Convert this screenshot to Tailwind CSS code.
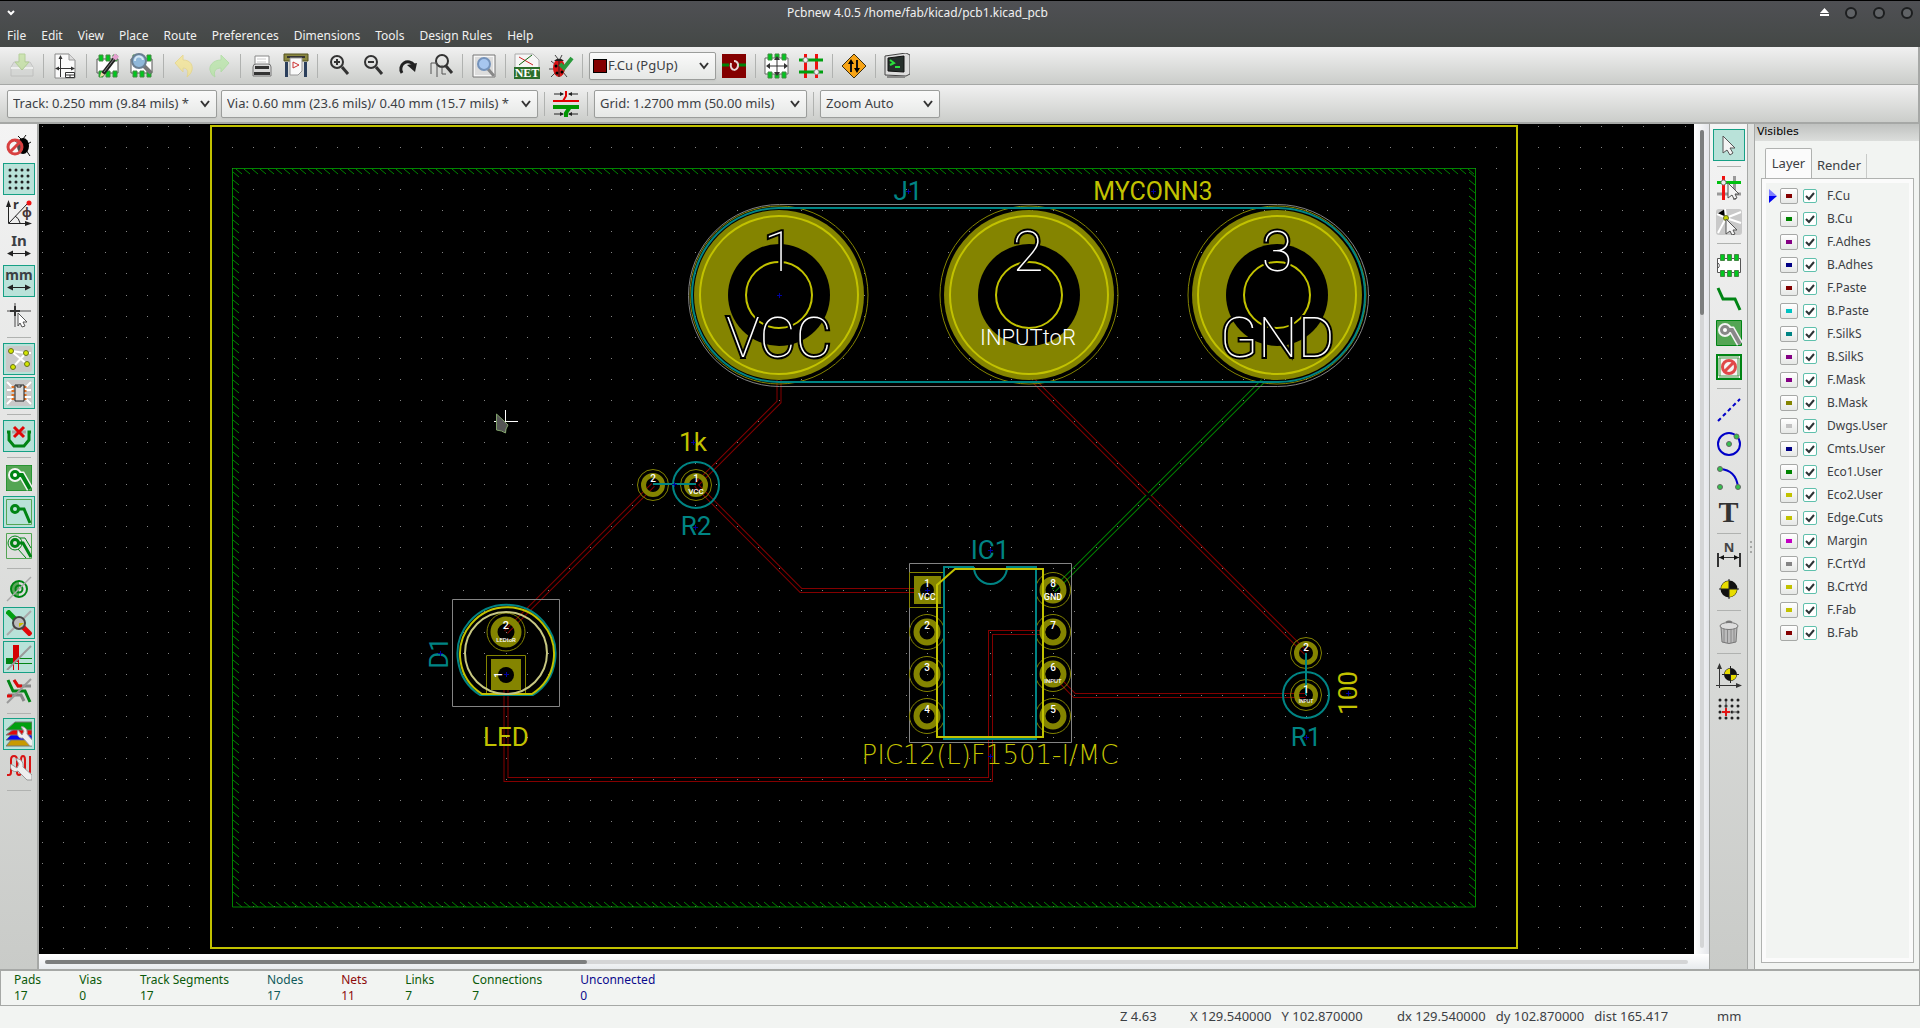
<!DOCTYPE html>
<html lang="en">
<head>
    <meta charset="UTF-8">
    <meta name="viewport" content="width=device-width, initial-scale=1.0">
    <title>Pcbnew 4.0.5 /home/fab/kicad/pcb1.kicad_pcb</title>
    <script src="https://cdn.jsdelivr.net/npm/@tailwindcss/browser@4"></script>
</head>
<body class="h-screen flex flex-col overflow-hidden bg-[#f2f4f2] text-[13px] text-[#3c4044] font-['Noto_Sans','Open_Sans',sans-serif]">

    <!-- Title bar and menu -->
    <header class="shrink-0 h-[47px] border-t border-black bg-linear-to-b from-[#4f5054] to-[#444846] text-[#f0f0f0]">
        <div class="h-[23px] flex items-center px-[7px]">
            <button aria-label="Window menu" class="w-2"><svg width="8" height="6" fill="none" stroke="#fff" stroke-width="2"><path d="M1 1l3 3 3-3"/></svg></button>
            <h1 class="grow text-center text-[12px]">Pcbnew 4.0.5 /home/fab/kicad/pcb1.kicad_pcb</h1>
            <div class="flex items-center gap-4">
                <button aria-label="Shade"><svg width="9" height="9" fill="#fff"><path d="M0 5l4.500-5L9 5zM0 6h9v2H0z"/></svg></button>
                <button aria-label="Minimize" class="size-3 rounded-full border-2 border-[#1c1e1f] bg-[#606366]"></button>
                <button aria-label="Maximize" class="size-3 rounded-full border-2 border-[#1c1e1f] bg-[#606366]"></button>
                <button aria-label="Close" class="size-3 rounded-full border-2 border-[#1c1e1f] bg-[#606366]"></button>
            </div>
        </div>
        <nav class="h-[23px] flex items-center gap-[15px] px-[7px] text-[12px]">
            <button>File</button><button>Edit</button><button>View</button><button>Place</button><button>Route</button>
            <button>Preferences</button><button>Dimensions</button><button>Tools</button><button>Design Rules</button><button>Help</button>
        </nav>
    </header>

    <!-- Main toolbar -->
    <div class="shrink-0 h-[38px] flex items-center pl-[5px] border-b border-[#a6a8a6] border-r-2 bg-linear-to-b from-[#f1f1f1] to-[#cbcdca]">
        <button aria-label="Save" class="w-[34px] flex justify-center opacity-50"><svg width="26" height="26"><path d="M2 14l3-5h16l3 5v9H2z" fill="#d4d6d4" stroke="#aaa"/><path d="M2 15h22" stroke="#fff" stroke-width="2"/><path d="M10 1h6v8h4l-7 8-7-8h4z" fill="#b3e07e" stroke="#85b850"/></svg></button>
        <i class="mx-1 w-px h-6 bg-[#b0b2b0]"></i>
        <button aria-label="Page settings" class="w-[34px] flex justify-center"><svg width="26" height="26" fill="none" stroke="#333"><path d="M3 1h14l6 6v18H3z" fill="#fafafa" stroke="#888"/><path d="M17 1v6h6" fill="#ddd" stroke="#999"/><path d="M8.500 3v21M4 15.500h18"/><path d="M8.500 2l-2 4h4zM3 15.500l4-2v4zM23 15.500l-4-2v4z" fill="#333" stroke="none"/><path d="M13.500 19.500h9v5h-9zM14 22h8M18 22v2" fill="#fff"/></svg></button>
        <i class="mx-1 w-px h-6 bg-[#b0b2b0]"></i>
        <button aria-label="Footprint editor" class="w-[34px] flex justify-center"><svg width="26" height="26"><path d="M2 6h21v14H2z" fill="#fff" stroke="#555"/><path d="M4 2h4v6H4zM11 2h4v6h-4zM18 2h4v6h-4zM4 18h4v6H4zM11 18h4v6h-4zM18 18h4v6h-4z" fill="#00c81e" stroke="#484"/><path d="M7 22L20 5" stroke="#222" stroke-width="4"/><path d="M9 19L19 6" stroke="#888"/><path d="M19 6l3-4" stroke="#e4a0d0" stroke-width="5"/><path d="M5 24l1-5 4 3z" fill="#edd9a4"/></svg></button>
        <button aria-label="Footprint viewer" class="w-[34px] flex justify-center"><svg width="26" height="26"><path d="M2 6h21v14H2z" fill="#fff" stroke="#555"/><path d="M4 2h4v6H4zM18 2h4v6h-4zM4 18h4v6H4zM11 18h4v6h-4zM18 18h4v6h-4z" fill="#00c81e" stroke="#484"/><path d="M15 13l7 7" stroke="#777" stroke-width="4"/><circle cx="10" cy="8" r="7" fill="#8fb8da" stroke="#6a7f92" stroke-width="2"/><path d="M6 8a4 4 0 018-1" fill="none" stroke="#d6e8f5" stroke-width="2"/></svg></button>
        <i class="mx-1 w-px h-6 bg-[#b0b2b0]"></i>
        <button aria-label="Undo" class="w-[34px] flex justify-center opacity-70"><svg width="26" height="26"><path d="M3 10l8-8v5c8 0 10 6 9 10-1 4-4 6-5 7 2-6 0-9-4-9v4z" fill="#f7e68a" stroke="#e8d478"/></svg></button>
        <button aria-label="Redo" class="w-[34px] flex justify-center opacity-70"><svg width="26" height="26"><path d="M23 10l-8-8v5c-8 0-12 6-11 10 1 4 3 6 5 7-2-6 1-9 6-9v4z" fill="#b4e6a2" stroke="#a4dc94"/></svg></button>
        <i class="mx-1 w-px h-6 bg-[#b0b2b0]"></i>
        <button aria-label="Print" class="w-[34px] flex justify-center"><svg width="26" height="26"><path d="M6 3h14v10H6z" fill="#fff" stroke="#888"/><path d="M8 6h9M8 9h9" stroke="#ccc"/><path d="M4 14q0-3 3-3h12q3 0 3 3v9H4z" fill="#d8d8d8" stroke="#777"/><path d="M6 13h14v3H6zM5 19h16v3H5z" fill="#333"/></svg></button>
        <button aria-label="Plot" class="w-[34px] flex justify-center"><svg width="26" height="26"><path d="M1 1h24v7H1z" fill="#8a8740" stroke="#55531f"/><path d="M4 4h18" stroke="#333" stroke-width="2"/><path d="M3.500 9v15M22.500 9v15" stroke="#2b3f5c" stroke-width="3"/><path d="M7 5h12v13l-4 4H7z" fill="#fafafa" stroke="#999"/><path d="M10 9v6l6-3z" fill="none" stroke="#c33"/></svg></button>
        <i class="mx-1 w-px h-6 bg-[#b0b2b0]"></i>
        <button aria-label="Zoom in" class="w-[34px] flex justify-center"><svg width="26" height="26" fill="none" stroke="#333" stroke-width="2"><circle cx="11" cy="9" r="6"/><path d="M16 14l6 7" stroke-width="3"/><path d="M11 6v6M8 9h6"/></svg></button>
        <button aria-label="Zoom out" class="w-[34px] flex justify-center"><svg width="26" height="26" fill="none" stroke="#333" stroke-width="2"><circle cx="11" cy="9" r="6"/><path d="M16 14l6 7" stroke-width="3"/><path d="M8 9h6"/></svg></button>
        <button aria-label="Redraw" class="w-[34px] flex justify-center"><svg width="26" height="26"><path d="M8 20a7 7 0 1112-8" fill="none" stroke="#222" stroke-width="3"/><path d="M13 12l10-2-2 9z" fill="#222"/></svg></button>
        <button aria-label="Zoom to fit" class="w-[34px] flex justify-center"><svg width="26" height="26" fill="none" stroke="#333" stroke-width="2"><circle cx="14" cy="8" r="6"/><path d="M18 13l6 7" stroke-width="3"/><path d="M3 21V10h6v14M14 12v9h4" stroke="#555" stroke-width="1"/></svg></button>
        <i class="mx-1 w-px h-6 bg-[#b0b2b0]"></i>
        <button aria-label="Find" class="w-[34px] flex justify-center"><svg width="26" height="26"><path d="M2 2h22v22H2z" fill="#f6f6f6" stroke="#777"/><path d="M4 4h18v18H4z" fill="#ddd"/><path d="M17 16l6 7" stroke="#888" stroke-width="3"/><circle cx="13" cy="11" r="6" fill="#a7c6ef" stroke="#7593bb" stroke-width="2"/></svg></button>
        <i class="mx-1 w-px h-6 bg-[#b0b2b0]"></i>
        <button aria-label="Read netlist" class="w-[34px] flex justify-center"><svg class="overflow-visible" width="26" height="26"><path d="M1 1h18l6 6v8H1z" fill="#f6f6f6" stroke="#aaa"/><path d="M5 4l14 8" stroke="#c22"/><path d="M5 12L18 2" stroke="#161"/><path d="M0 14h26v12H0z" fill="#2b6e2b"/><text x="13" y="24" text-anchor="middle" class="font-['Liberation_Serif',serif] font-bold text-[12px] fill-white">NET</text></svg></button>
        <button aria-label="Design rules check" class="w-[34px] flex justify-center"><svg width="26" height="26"><path d="M3 8l5 4M1 16h6M3 24l5-5M19 24l-4-5M7 2l3 4M14 2l-2 4" stroke="#444"/><ellipse cx="11" cy="15" rx="6" ry="9" fill="#d81414"/><path d="M6 8a6 5 0 0110 0z" fill="#222"/><circle cx="8" cy="13" r="1.500"/><circle cx="14" cy="19" r="1.500"/><circle cx="9" cy="20" r="1.500"/><path d="M11 7v17" stroke="#222"/><path d="M12 11l4 4 8-10" fill="none" stroke="#2a9a3c" stroke-width="4"/></svg></button>
        <i class="mx-1 w-px h-6 bg-[#b0b2b0]"></i>
        <div class="relative ml-0.5 mr-px">
            <select aria-label="Active layer" class="appearance-none w-[127px] h-7 pl-[18px] rounded-xs border border-[#9b9d9b] bg-linear-to-b from-[#fafafa] to-[#e6e8e6] shadow-xs"><option>F.Cu (PgUp)</option></select>
            <i class="absolute left-1 top-[7px] size-[14px] border border-black bg-[#840000] pointer-events-none"></i>
            <svg class="absolute right-[7px] top-[10px] pointer-events-none" width="10" height="8" fill="none" stroke="#333" stroke-width="2"><path d="M1 1l4 5 4-5"/></svg>
        </div>
        <button aria-label="Layer pair" class="w-[34px] flex justify-center"><svg width="24" height="24"><path d="M0 0h24v24H0z" fill="#840000"/><path d="M0 11h7M17 11h7" stroke="#00840a" stroke-width="3"/><path d="M9 9c-2 9 8 9 7 1q-1-3-4-3" fill="none" stroke="#e6d6d6" stroke-width="2"/></svg></button>
        <i class="mx-1 w-px h-6 bg-[#b0b2b0]"></i>
        <button aria-label="Footprint mode" class="w-[34px] flex justify-center"><svg width="26" height="26"><path d="M1 5h23v16H1z" fill="#fff" stroke="#666"/><path d="M4 1h4v6H4zM18 1h4v6h-4zM4 19h4v6H4zM18 19h4v6h-4zM11 1h4v4h-4zM11 21h4v4h-4z" fill="#00c81e" stroke="#484"/><path d="M13 5v17M4 13h18" stroke="#333"/><path d="M13 3l3 4h-6zM13 23l3-4h-6zM2 13l4-3v6zM24 13l-4-3v6z" fill="#333"/></svg></button>
        <button aria-label="Track mode" class="w-[34px] flex justify-center"><svg width="26" height="26"><path d="M7.500 1v24M18.500 1v24" stroke="#f01010" stroke-width="3"/><path d="M1 7h24M1 19h24" stroke="#00a010" stroke-width="3"/><circle cx="7.500" cy="7" r="2.500" fill="#eee" stroke="#888"/><circle cx="18.500" cy="19" r="2.500" fill="#eee" stroke="#888"/></svg></button>
        <i class="mx-1 w-px h-6 bg-[#b0b2b0]"></i>
        <button aria-label="FreeRoute" class="w-[34px] flex justify-center"><svg width="26" height="26"><path d="M13 1l12 12-12 12L1 13z" fill="#f7a416" stroke="#3c2e10" stroke-linejoin="round"/><path d="M10 19V9M16 7v10" stroke="#111" stroke-width="2"/><path d="M10 6l-3 5h6zM16 20l-3-5h6z"/></svg></button>
        <i class="mx-1 w-px h-6 bg-[#b0b2b0]"></i>
        <button aria-label="Scripting console" class="w-[34px] flex justify-center"><svg width="26" height="26"><path d="M1 3L22 0l4 2v19l-4 2L1 22z" fill="#ddd" stroke="#444"/><path d="M4 5l16-2v16L4 18z" fill="#26302c" stroke="#111"/><path d="M3 24h18" stroke="#888" stroke-width="2"/><path d="M6 7l4 3-4 2M11 14h5" fill="none" stroke="#2be03c" stroke-width="2"/></svg></button>
    </div>

    <!-- Auxiliary toolbar -->
    <div class="shrink-0 h-[39px] flex items-center pl-[7px] border-b-2 border-[#a6a8a6] border-r-2 bg-linear-to-b from-[#f1f1f1] to-[#cbcdca]">
        <div class="relative mr-1">
            <select aria-label="Track width" class="appearance-none w-[210px] h-7 pl-[5px] rounded-xs border border-[#9b9d9b] bg-linear-to-b from-[#fafafa] to-[#e6e8e6] shadow-xs"><option>Track: 0.250 mm (9.84 mils) *</option></select>
            <svg class="absolute right-[7px] top-[10px] pointer-events-none" width="10" height="8" fill="none" stroke="#333" stroke-width="2"><path d="M1 1l4 5 4-5"/></svg>
        </div>
        <div class="relative mr-0.5">
            <select aria-label="Via size" class="appearance-none w-[317px] h-7 pl-[5px] rounded-xs border border-[#9b9d9b] bg-linear-to-b from-[#fafafa] to-[#e6e8e6] shadow-xs"><option>Via: 0.60 mm (23.6 mils)/ 0.40 mm (15.7 mils) *</option></select>
            <svg class="absolute right-[7px] top-[10px] pointer-events-none" width="10" height="8" fill="none" stroke="#333" stroke-width="2"><path d="M1 1l4 5 4-5"/></svg>
        </div>
        <i class="mx-1 w-px h-6 bg-[#b0b2b0]"></i>
        <button aria-label="Auto track width" class="w-[34px] flex justify-center"><svg width="26" height="26" fill="none"><path d="M0 10h26" stroke="#e00000" stroke-width="2"/><path d="M0 16h26" stroke="#009600" stroke-width="4"/><path d="M13 0v5l-3 5" stroke="#e00000" stroke-width="2"/><path d="M13 26v-4l4-6" stroke="#009600" stroke-width="4"/><path d="M1 3h9M25 3h-9M1 23h9M25 23h-9" stroke="#222"/><path d="M11 3L7 1v4zM15 3l4-2v4zM11 23l-4-2v4zM15 23l4-2v4z" fill="#222"/></svg></button>
        <i class="mx-1 w-px h-6 bg-[#b0b2b0]"></i>
        <div class="relative ml-0.5">
            <select aria-label="Grid" class="appearance-none w-[213px] h-7 pl-[5px] rounded-xs border border-[#9b9d9b] bg-linear-to-b from-[#fafafa] to-[#e6e8e6] shadow-xs"><option>Grid: 1.2700 mm (50.00 mils)</option></select>
            <svg class="absolute right-[7px] top-[10px] pointer-events-none" width="10" height="8" fill="none" stroke="#333" stroke-width="2"><path d="M1 1l4 5 4-5"/></svg>
        </div>
        <i class="mx-1.5 w-px h-6 bg-[#b0b2b0]"></i>
        <div class="relative">
            <select aria-label="Zoom" class="appearance-none w-[120px] h-7 pl-[5px] rounded-xs border border-[#9b9d9b] bg-linear-to-b from-[#fafafa] to-[#e6e8e6] shadow-xs"><option>Zoom Auto</option></select>
            <svg class="absolute right-[7px] top-[10px] pointer-events-none" width="10" height="8" fill="none" stroke="#333" stroke-width="2"><path d="M1 1l4 5 4-5"/></svg>
        </div>
    </div>

    <main class="grow min-h-0 flex border-b-2 border-[#a6a8a6]">
        <!-- Options toolbar -->
        <div class="shrink-0 w-[39px] pt-[5px] pl-px flex flex-col items-center border-r-2 border-[#a6a8a6] bg-linear-to-b from-[#f4f4f4] to-[#c9cbc8]">
            <button aria-label="Disable DRC" class="size-8 mb-0.5 grid place-items-center"><svg width="26" height="26"><path d="M12 4l3 3M20 3l-3 4M9 9l4 3M25 10l-5 3M24 24l-4-6M12 22l3-4" stroke="#111" stroke-width="1"/><ellipse cx="17" cy="14" rx="6" ry="8"/><circle cx="9" cy="15" r="7" fill="#fff" fill-opacity=".3" stroke="#d84040" stroke-width="3"/><path d="M4 20L14 10" stroke="#d84040" stroke-width="3"/></svg></button>
            <button aria-label="Show grid" class="size-8 mb-0.5 grid place-items-center border border-[#16a085] bg-[#b9e2d9]"><svg width="26" height="26" stroke="#222" stroke-width="3" stroke-linecap="round" stroke-dasharray="0 6"><path d="M4 4h19M4 10h19M4 16h19M4 22h19"/></svg></button>
            <button aria-label="Polar coordinates" class="size-8 mb-0.5 grid place-items-center"><svg class="overflow-visible" width="26" height="26" fill="none" stroke="#222"><path d="M2.500 3v20.500H22M3 23L22 3M9 16q4 2 5 7" stroke-width="1"/><path d="M2.500 0L0 7h5zM26 23.500L19 21v5z" fill="#222" stroke="none"/><circle cx="23" cy="3" r="2.500" fill="#f01414" stroke="none"/><text x="7" y="9" class="fill-[#333] stroke-none text-[13px] font-bold">r</text><text x="16" y="17" class="fill-[#433] stroke-none text-[12px] font-bold">φ</text></svg></button>
            <button aria-label="Units in inches" class="size-8 mb-0.5 grid place-items-center"><svg class="overflow-visible" width="26" height="26"><text x="13" y="12" text-anchor="middle" class="fill-[#3c4044] text-[15px] font-bold">In</text><path d="M4 19.500h18" stroke="#222"/><path d="M1 19.500l6-3v6zM25 19.500l-6-3v6z" fill="#222"/></svg></button>
            <button aria-label="Units in millimeters" class="size-8 mb-0.5 grid place-items-center border border-[#16a085] bg-[#b9e2d9]"><svg class="overflow-visible" width="26" height="26"><text x="13" y="12" text-anchor="middle" class="fill-[#3c4044] text-[14px] font-bold">mm</text><path d="M4 19.500h18" stroke="#222"/><path d="M1 19.500l6-3v6zM25 19.500l-6-3v6z" fill="#222"/></svg></button>
            <button aria-label="Cursor shape" class="size-8 mb-0.5 grid place-items-center"><svg width="26" height="26"><path d="M9 1v24M1 9h24" stroke="#999" stroke-width="2"/><path d="M9 4v10M4 9h10" stroke="#333" stroke-width="2"/><path d="M12 11l9 9h-4l2 4-3 1-2-4-2 3z" fill="#fff" stroke="#555"/></svg></button>
            <i class="my-1 w-6 h-px bg-[#b0b2b0]"></i>
            <button aria-label="Show ratsnest" class="size-8 my-px grid place-items-center border border-[#16a085] bg-[#b9e2d9]"><svg width="26" height="26"><rect width="26" height="26" rx="3" fill="#c9c9c9"/><path d="M5 5l15 2 5 0M7 21L20 7M5 5l16 13" stroke="#fff" stroke-width="2"/><g fill="#d4e600" stroke="#667020"><circle cx="5" cy="5" r="2.500"/><circle cx="20" cy="7" r="2.500"/><circle cx="7" cy="21" r="2.500"/><circle cx="21" cy="18" r="2.500"/></g></svg></button>
            <button aria-label="Module ratsnest" class="size-8 my-px grid place-items-center border border-[#16a085] bg-[#b9e2d9]"><svg width="26" height="26"><rect width="26" height="26" rx="3" fill="#c9c9c9"/><path d="M1 2l6 6M25 2l-6 6M1 10h6M25 10h-6M1 17h6M25 17h-6M1 24l6-6M25 24l-6-6" stroke="#fff" stroke-width="2"/><path d="M7 6v16M19 6v16" stroke="#e07020" stroke-width="3" stroke-dasharray="2 2"/><path d="M9 5h9v16H9z" fill="#ddd" stroke="#222"/><path d="M11 5v2h4V5" fill="none" stroke="#222"/></svg></button>
            <i class="my-1 w-6 h-px bg-[#b0b2b0]"></i>
            <button aria-label="Auto delete track" class="size-8 my-px grid place-items-center border border-[#16a085] bg-[#b9e2d9]"><svg width="26" height="26" fill="none"><path d="M6 9h14" stroke="#a8a8a8" stroke-width="3"/><path d="M1 9h2v8l5 6h10l5-6V9h2" stroke="#008414" stroke-width="3"/><path d="M8 4l10 10M18 4L8 14" stroke="#e00808" stroke-width="3"/></svg></button>
            <i class="my-1 w-6 h-px bg-[#b0b2b0]"></i>
            <button aria-label="Show filled zones" class="size-8 mb-0.5 grid place-items-center"><svg width="26" height="26" fill="none"><path d="M0 0h26v26H0z" fill="#54a554" stroke="#008414"/><path d="M9 10h7l8 14" stroke="#f4f4f4" stroke-width="7"/><circle cx="9" cy="10" r="6" fill="#008414" stroke="#f4f4f4" stroke-width="2"/><path d="M10 10h6l8 14" stroke="#008414" stroke-width="4"/><circle cx="9" cy="10" r="2" fill="#fff"/></svg></button>
            <button aria-label="Hide filled zones" class="size-8 mb-0.5 grid place-items-center border border-[#16a085] bg-[#b9e2d9]"><svg width="26" height="26" fill="none"><path d="M.5.5h25v25H.5z" stroke="#54a554"/><circle cx="9" cy="10" r="3.500" stroke="#008414" stroke-width="3"/><path d="M12 10h6l6 14" stroke="#008414" stroke-width="3"/></svg></button>
            <button aria-label="Outline zones" class="size-8 mb-0.5 grid place-items-center"><svg width="26" height="26" fill="none" stroke="#008414"><path d="M.5.500h25v25H.500z" stroke="#54a554"/><circle cx="9" cy="10" r="7"/><circle cx="9" cy="10" r="3.500" stroke-width="3"/><path d="M12 10h5l8 14" stroke-width="3"/><path d="M14 5h5l6 10M12 16l8 9"/></svg></button>
            <i class="my-1 w-6 h-px bg-[#b0b2b0]"></i>
            <button aria-label="Via sketch" class="size-8 mb-0.5 grid place-items-center"><svg width="26" height="26" fill="none" stroke="#008414" stroke-width="2"><path d="M13 5a8 8 0 000 16z" fill="#5ba65b" stroke="none"/><circle cx="13" cy="13" r="8"/><circle cx="13" cy="13" r="3.500"/><path d="M1 25L25 1" stroke="#aaa" stroke-width="1.500"/></svg></button>
            <button aria-label="Pad sketch" class="size-8 mb-0.5 grid place-items-center border border-[#16a085] bg-[#b9e2d9]"><svg width="26" height="26" fill="none"><path d="M1 1l10 10" stroke="#00a010" stroke-width="5"/><path d="M14 14l11 11" stroke="#e00808" stroke-width="5"/><path d="M1 25L25 1" stroke="#aaa" stroke-width="2"/><circle cx="13" cy="13" r="6" fill="#bbb" stroke="#444" stroke-width="2"/><path d="M13 13h5l-5 4z" fill="#c8c000"/></svg></button>
            <button aria-label="Track sketch" class="size-8 mb-0.5 grid place-items-center border border-[#16a085] bg-[#b9e2d9]"><svg width="26" height="26" fill="none"><path d="M0 17h10" stroke="#008414" stroke-width="6"/><path d="M10 14.500h16M10 19.500h16" stroke="#008414"/><path d="M10 1v17" stroke="#d40000" stroke-width="6"/><path d="M7.500 18v9M12.500 15v12" stroke="#d40000"/><path d="M1 26L25 2" stroke="#999" stroke-width="2"/></svg></button>
            <button aria-label="High contrast" class="size-8 mb-0.5 grid place-items-center"><svg width="26" height="26" fill="none" stroke-width="3"><path d="M8 2l4 6h13M2 17h13l3 6" stroke="#888"/><path d="M8 2l4 6h4M1 18h5" stroke="#e00808"/><path d="M2 2l5 11h12l5 11" stroke="#008414"/><path d="M1 25L25 1" stroke="#999" stroke-width="2"/></svg></button>
            <i class="my-1 w-6 h-px bg-[#b0b2b0]"></i>
            <button aria-label="Layers manager" class="size-8 mb-0.5 grid place-items-center border border-[#16a085] bg-[#b9e2d9]"><svg width="26" height="26"><path d="M0 25l6-7h20v7z" fill="#c89a00" stroke="#777"/><path d="M0 19l6-6h20v6z" fill="#0808f0" stroke="#777"/><path d="M0 14l8-6h18v6z" fill="#e00808" stroke="#777"/><path d="M0 9l9-8h17v8z" fill="#00a010" stroke="#777"/><path d="M12 9c-2 5 1 9 5 8l7 8h3v-5l-6-7c1-5-3-8-6-7l3 4-2 4z" fill="#eee" stroke="#999"/></svg></button>
            <button aria-label="Microwave tools" class="size-8 mb-0.5 grid place-items-center"><svg width="26" height="26"><path d="M1 20h2q2 0 2-3V5q0-4 3-4t3 4v12q0 3 2 3t2-3V5q0-4 2-4t2 4v12q0 3 2 3t3-3V1" fill="none" stroke="#d81414" stroke-width="2"/><path d="M5 9c-2 5 2 9 7 7l9 9h5v-5l-9-8c1-5-3-9-7-8l3 5-2 4z" fill="#eee" stroke="#999"/></svg></button>
            <i class="my-1 w-6 h-px bg-[#b0b2b0]"></i>
        </div>

        <!-- Board canvas with scroll bars -->
        <div class="grow min-w-0 flex flex-col">
            <div class="grow min-h-0 flex">
                <svg class="grow min-w-0 bg-black font-[Roboto,sans-serif]" role="img" aria-label="Board">
                    <g transform="translate(-39 -124)" fill="none">
                        <!-- tracks -->
                        <g stroke="#840000" stroke-width="5">
                            <path d="M779 380v22L696 485M696 485l105 105.500h126M653 485L506 632M506 675v104.500h484.500V632.500h63M1053.500 674l21 21.500h231M1033 380l273 273"/>
                            <path stroke="#008400" d="M1263 381L1053.500 590.500"/>
                        </g>
                        <g stroke="#000" stroke-width="3">
                            <path d="M779 380v22L696 485M696 485l105 105.500h126M653 485L506 632M506 675v104.500h484.500V632.500h63M1053.500 674l21 21.500h231M1033 380l273 273M1263 381L1053.500 590.500"/>
                        </g>
                        <path id="gridDots" fill="#848484"/>
                        <!-- zone and board edge -->
                        <path id="zoneHatch" stroke="#008400"/>
                        <path d="M232.500 168.500h1243V907H232.500z" stroke="#008400"/>
                        <path d="M211 126h1306v822H211z" stroke="#c2c200" stroke-width="2"/>

                        <!-- J1 connector -->
                        <g fill="#848400">
                            <circle cx="779" cy="295" r="85"/><circle cx="1029" cy="295" r="85"/><circle cx="1277" cy="295" r="85"/>
                        </g>
                        <g stroke="#848400">
                            <circle cx="779" cy="295" r="89"/><circle cx="1029" cy="295" r="89"/><circle cx="1277" cy="295" r="89"/>
                        </g>
                        <g fill="#000">
                            <circle cx="779" cy="295" r="51"/><circle cx="1029" cy="295" r="51"/><circle cx="1277" cy="295" r="51"/>
                        </g>
                        <g stroke="#c2c200" stroke-width="2">
                            <circle cx="779" cy="295" r="79"/><circle cx="1029" cy="295" r="79"/><circle cx="1277" cy="295" r="79"/>
                            <circle cx="779" cy="295" r="33"/><circle cx="1029" cy="295" r="33"/><circle cx="1277" cy="295" r="33"/>
                        </g>
                        <rect x="692" y="208" width="673" height="174" rx="87" stroke="#008484" stroke-width="2"/>
                        <rect x="688.500" y="204.500" width="680" height="182" rx="91" stroke="#848484"/>
                        <g class="fill-white stroke-black font-thin text-[56px] [paint-order:stroke]" stroke-width="4" text-anchor="middle">
                            <text x="779" y="271">1</text><text x="1028" y="271">2</text><text x="1277" y="271">3</text>
                            <text x="779" y="357">VCC</text><text x="1277" y="357">GND</text>
                        </g>
                        <text x="1028" y="345" text-anchor="middle" class="fill-white font-light text-[22px]">INPUTtoR</text>

                        <!-- R2 and R1 resistors -->
                        <g stroke="#848400">
                            <circle cx="653" cy="485" r="9.500" stroke-width="5"/><circle cx="696" cy="485" r="9.500" stroke-width="5"/>
                            <circle cx="653" cy="485" r="15.500"/><circle cx="696" cy="485" r="15.500"/>
                            <circle cx="1306" cy="653" r="9.500" stroke-width="5"/><circle cx="1306" cy="695" r="9.500" stroke-width="5"/>
                            <circle cx="1306" cy="653" r="15.500"/><circle cx="1306" cy="695" r="15.500"/>
                        </g>
                        <g stroke="#008484" stroke-width="2">
                            <circle cx="696" cy="485" r="23"/><path d="M653 484h43"/>
                            <circle cx="1306" cy="695" r="23"/><path d="M1306 653v42"/>
                        </g>

                        <!-- D1 LED -->
                        <path d="M452.500 599.500h107v107h-107z" stroke="#848484"/>
                        <circle cx="506" cy="632" r="12" stroke="#848400" stroke-width="7"/>
                        <circle cx="506" cy="632" r="19" stroke="#848400"/>
                        <path d="M486.500 694v-38.500h39V694" stroke="#848400"/>
                        <path d="M491 659h30v31h-30z" fill="#848400"/>
                        <circle cx="506" cy="675" r="8" fill="#000"/>
                        <g stroke-width="2">
                            <path d="M480 695a49 49 0 1153 0z" stroke="#008484"/>
                            <path d="M482 694a47 47 0 1150 0z" stroke="#c2c200"/>
                            <circle cx="506" cy="653" r="41" stroke="#c8c882"/>
                        </g>

                        <!-- IC1 -->
                        <path d="M909.500 563.500h162v179h-162z" stroke="#848484"/>
                        <path d="M909.500 572.500h35v35h-35z" stroke="#848400"/>
                        <path d="M914 576h27v28h-27z" fill="#848400"/>
                        <circle cx="927" cy="590" r="7" fill="#000"/>
                        <g stroke="#848400" stroke-width="6">
                            <circle cx="927" cy="632" r="10.500"/><circle cx="927" cy="674" r="10.500"/><circle cx="927" cy="716" r="10.500"/>
                            <circle cx="1053" cy="590" r="10.500"/><circle cx="1053" cy="632" r="10.500"/><circle cx="1053" cy="674" r="10.500"/><circle cx="1053" cy="716" r="10.500"/>
                        </g>
                        <g fill="#000">
                            <circle cx="1053" cy="632" r="7.500"/><circle cx="1053" cy="674" r="7.500"/>
                        </g>
                        <g stroke="#848400">
                            <circle cx="927" cy="632" r="17.500"/><circle cx="927" cy="674" r="17.500"/><circle cx="927" cy="716" r="17.500"/>
                            <circle cx="1053" cy="590" r="17.500"/><circle cx="1053" cy="632" r="17.500"/><circle cx="1053" cy="674" r="17.500"/><circle cx="1053" cy="716" r="17.500"/>
                        </g>
                        <path d="M974 567h-30v172h92V567h-29a16.500 17 0 01-33 0" stroke="#008484" stroke-width="2"/>
                        <path d="M955 569h88v168H937V585z" stroke="#c2c200" stroke-width="2"/>

                        <!-- pad numbers and nets -->
                        <g class="fill-white font-medium text-[10px]" text-anchor="middle">
                            <text x="653" y="482">2</text><text x="696" y="482">1</text>
                            <text x="1306" y="651">2</text><text x="1306" y="693">1</text>
                            <text x="506" y="629" class="text-[11px]">2</text>
                            <text x="502" y="675" transform="rotate(-90 502 675)">1</text>
                            <text x="927" y="587">1</text><text x="927" y="629">2</text><text x="927" y="671">3</text><text x="927" y="713">4</text>
                            <text x="1053" y="587">8</text><text x="1053" y="629">7</text><text x="1053" y="671">6</text><text x="1053" y="713">5</text>
                        </g>
                        <g class="fill-white font-medium text-[9px]" text-anchor="middle">
                            <text x="696" y="494" class="text-[8px]">VCC</text><text x="927" y="600">VCC</text><text x="1053" y="600">GND</text>
                            <text x="1053" y="683" class="text-[6px]">INPUT</text>
                            <text x="1306" y="703" class="text-[5px]">INPUT</text>
                            <text x="506" y="642" class="text-[6px]">LEDtoR</text>
                        </g>

                        <!-- references -->
                        <g class="fill-[#008484] text-[26px]" text-anchor="middle">
                            <text x="908" y="200">J1</text><text x="696" y="535">R2</text><text x="990" y="559">IC1</text><text x="1306" y="746">R1</text>
                            <text x="448" y="653" transform="rotate(-90 448 653)">D1</text>
                        </g>
                        <!-- values -->
                        <g class="fill-[#c2c200] text-[26px]" text-anchor="middle">
                            <text x="1153" y="200" class="text-[25px]">MYCONN3</text><text x="693" y="451">1k</text><text x="506" y="746">LED</text>
                            <text x="990" y="764" class="font-['DejaVu_Sans',sans-serif] font-extralight">PIC12(L)F1501-I/MC</text>
                            <text x="1357" y="693" transform="rotate(-90 1357 693)">100</text>
                        </g>
                        <path stroke="#0000a0" d="M777 295.500h5M779.500 293v5M672 484.500h5M674.500 482v5M691 442.500h5M693.500 440v5M693 527.500h5M695.500 525v5M438 653.500h5M440.500 651v5M504 674.500h5M506.500 672v5M925 590.500h5M927.500 588v5M988 550.500h5M990.500 548v5M988 756.500h5M990.500 754v5M1346 693.500h5M1348.500 691v5M1304 737.500h5M1306.500 735v5M1151 191.500h5M1153.500 189v5M906 191.500h5M908.500 189v5"/>

                        <!-- cursor -->
                        <path d="M494 421.500h24M505.500 410v23" stroke="#fff"/>
                        <path d="M496.500 414v16l5 1 4 2 .5-4 2-4-3-3z" fill="#555" stroke="#7fa06a"/>
                    </g>
                </svg>
                <div class="shrink-0 w-[15px] flex justify-center pt-1.5 pb-1.5 bg-linear-to-r from-white to-[#e4e6ea]">
                    <div class="w-1 rounded-full bg-[#d4d5d6]"><div class="h-[185px] rounded-full bg-[#7c7e7e]"></div></div>
                </div>
            </div>
            <div class="shrink-0 h-[15px] flex items-center pl-1.5 pr-[21px] bg-linear-to-b from-white to-[#e8ebee]">
                <div class="grow h-1 rounded-full bg-[#d4d5d6]"><div class="w-[33%] h-full rounded-full bg-[#7c7e7e]"></div></div>
            </div>
        </div>

        <!-- Drawing toolbar -->
        <div class="shrink-0 w-[39px] pt-[5px] flex flex-col items-center border-x border-[#a6a8a6] bg-linear-to-b from-[#f4f4f4] to-[#c9cbc8]">
            <button aria-label="Select" class="size-8 mb-px grid place-items-center border border-[#16a085] bg-[#b9e2d9]"><svg width="26" height="26"><path d="M7 4l12 12h-5l3 5-3 2-3-5-4 3z" fill="#f4f4f4" stroke="#555"/></svg></button>
            <i class="my-1 w-6 h-px bg-[#b0b2b0]"></i>
            <button aria-label="Highlight net" class="size-8 my-px grid place-items-center"><svg width="26" height="26"><path d="M18.500 1v24M1 19h24" stroke="#999" stroke-width="3"/><path d="M7.500 1v24" stroke="#f01010" stroke-width="3"/><path d="M1 7.500h24" stroke="#00c010" stroke-width="3"/><circle cx="7.500" cy="7.500" r="2.500" fill="#eee" stroke="#777"/><path d="M12 8l11 11h-4l2 4-3 1-2-4-4 3z" fill="#f4f4f4" stroke="#555"/></svg></button>
            <button aria-label="Local ratsnest" class="size-8 my-px grid place-items-center"><svg width="26" height="26"><rect width="26" height="26" rx="3" fill="#c9c9c9"/><path d="M1 5l9 4L9 0M10 9l15-6M10 9l15 5M10 9L2 24" stroke="#fff" stroke-width="2"/><circle cx="10" cy="9" r="2.500" fill="#c8d800" stroke="#667020"/><path d="M10 10l11 11h-4l2 4-3 1-2-4-4 3z" fill="#f4f4f4" stroke="#555"/></svg></button>
            <i class="my-1 w-6 h-px bg-[#b0b2b0]"></i>
            <button aria-label="Add footprint" class="size-8 my-px grid place-items-center"><svg width="26" height="26"><path d="M1.500 6.500h23v14h-23z" fill="#fff" stroke="#555"/><path d="M2 11a3 3 0 010 5" fill="none" stroke="#555"/><path d="M4.500 2.500h4v6h-4zM11.500 2.500h4v6h-4zM18.500 2.500h4v6h-4zM4.500 18.500h4v6h-4zM11.500 18.500h4v6h-4zM18.500 18.500h4v6h-4z" fill="#00c81e" stroke="#484"/></svg></button>
            <button aria-label="Add track" class="size-8 my-px grid place-items-center"><svg width="26" height="26"><path d="M2 2l5 11h12l5 11" fill="none" stroke="#008414" stroke-width="3"/></svg></button>
            <button aria-label="Add zone" class="size-8 my-px grid place-items-center"><svg width="26" height="26" fill="none"><path d="M.5.500h25v25H.500z" fill="#54a554" stroke="#008414"/><path d="M9 10h7l8 14" stroke="#f4f4f4" stroke-width="7"/><circle cx="9" cy="10" r="6" fill="#888" stroke="#f4f4f4" stroke-width="2"/><path d="M10 10h6l8 14" stroke="#888" stroke-width="4"/><circle cx="9" cy="10" r="2" fill="#fff"/></svg></button>
            <button aria-label="Add keepout" class="size-8 my-px grid place-items-center"><svg width="26" height="26" fill="none"><path d="M1 1h24v24H1z" fill="#f4f4f4" stroke="#008414" stroke-width="2"/><path d="M3.500 3.500h19v19h-19z" stroke="#4a9a4a" stroke-width="3" stroke-dasharray="1 1"/><circle cx="13" cy="13" r="6.500" stroke="#e04848" stroke-width="3"/><path d="M9 17l8-8" stroke="#e04848" stroke-width="3"/></svg></button>
            <i class="my-1 w-6 h-px bg-[#b0b2b0]"></i>
            <button aria-label="Add line" class="size-8 my-px grid place-items-center"><svg width="26" height="26"><path d="M2 24L24 2" stroke="#0000c8" stroke-width="2" stroke-dasharray="4 3"/></svg></button>
            <button aria-label="Add circle" class="size-8 my-px grid place-items-center"><svg width="26" height="26"><circle cx="13" cy="13" r="11" fill="none" stroke="#0000c8" stroke-width="2"/><g fill="#34c04c" stroke="#666"><circle cx="13" cy="13" r="2.500"/><circle cx="20.500" cy="5.500" r="2.500"/></g></svg></button>
            <button aria-label="Add arc" class="size-8 my-px grid place-items-center"><svg width="26" height="26"><path d="M4 4q16 1 18 18" fill="none" stroke="#0000c8" stroke-width="2"/><g fill="#34c04c" stroke="#666"><circle cx="4" cy="4" r="2.500"/><circle cx="4" cy="22" r="2.500"/><circle cx="22" cy="22" r="2.500"/></g></svg></button>
            <button aria-label="Add text" class="size-8 my-px grid place-items-center font-['Liberation_Serif',serif] font-bold text-[30px] leading-8 text-[#333]">T</button>
            <i class="my-1 w-6 h-px bg-[#b0b2b0]"></i>
            <button aria-label="Add dimension" class="size-8 my-px grid place-items-center"><svg class="overflow-visible" width="26" height="26"><text x="13" y="10" text-anchor="middle" class="text-[13px] font-bold fill-[#444]">N</text><path d="M2 11v14M24 11v14" stroke="#333" stroke-width="2"/><path d="M3 15.500h20" stroke="#333"/><path d="M3 15.500l5-2.500v5zM23 15.500L18 13v5z" fill="#111"/></svg></button>
            <button aria-label="Add target" class="size-8 my-px grid place-items-center"><svg width="26" height="26"><circle cx="13" cy="13" r="8.500" fill="#111"/><path d="M13 13V5a8 8 0 00-8 8zM13 13v8a8 8 0 008-8z" fill="#e8dc00"/><path d="M13 3v20M3 13h20" stroke="#222"/></svg></button>
            <i class="my-1 w-6 h-px bg-[#b0b2b0]"></i>
            <button aria-label="Delete" class="size-8 my-px grid place-items-center"><svg width="26" height="26"><path d="M5 8h16l-1 15q-7 3-14 0z" fill="#bbb" stroke="#777"/><path d="M8 10v13M11.500 10v14M15 10v14M18 10v13" stroke="#888"/><ellipse cx="13" cy="7" rx="9" ry="3.500" fill="#ddd" stroke="#777"/><path d="M10 3.500q3-2 6 0" fill="none" stroke="#777" stroke-width="2"/></svg></button>
            <i class="my-1 w-6 h-px bg-[#b0b2b0]"></i>
            <button aria-label="Drill origin" class="size-8 my-px grid place-items-center"><svg width="26" height="26"><path d="M3.500 5v21M0 23.500h20" stroke="#333"/><path d="M3.500 1L1 7h5zM26 23.500L20 21v5z" fill="#333"/><circle cx="14.500" cy="12.500" r="6.500" fill="#111"/><path d="M14.500 12.500v-6a6 6 0 00-6 6zM14.500 12.500v6a6 6 0 006-6z" fill="#e8dc00"/><path d="M14.500 4v17M6 12.500h17" stroke="#222"/></svg></button>
            <button aria-label="Grid origin" class="size-8 my-px grid place-items-center"><svg width="26" height="26"><path d="M4 4h19M4 10h19M4 16h19M4 22h19" stroke="#222" stroke-width="3" stroke-linecap="round" stroke-dasharray="0 6"/><path d="M10 5v8M16 16h6" stroke="#555"/><path d="M10 12v8M6 16h8" stroke="#e01414" stroke-width="2"/></svg></button>
        </div>
        <div class="shrink-0 w-1.5 flex flex-col justify-center items-center gap-[3px] bg-[#dfe1df]">
            <i class="size-0.5 bg-[#a6a8a6]"></i><i class="size-0.5 bg-[#a6a8a6]"></i><i class="size-0.5 bg-[#a6a8a6]"></i>
        </div>

        <!-- Layers manager -->
        <aside class="shrink-0 w-[166px] flex flex-col border-x border-[#a6a8a6]">
            <h2 class="shrink-0 h-[17px] pl-[2px] text-[11px] leading-4 text-black bg-linear-to-b from-[#c0c2c0] to-[#dcdedc] font-['DejaVu_Sans',sans-serif]">Visibles</h2>
            <div class="grow flex flex-col pt-[7px] pl-1.5 pr-[5px] pb-1.5">
                <div class="shrink-0 h-[31px] pl-1 flex items-end -mb-px">
                    <button class="w-[47px] h-full border border-b-0 border-[#b0b2b0] rounded-t-xs bg-[#fbfbfb]">Layer</button>
                    <button class="w-[55px] h-6 border-r border-[#c8cac8] mb-px">Render</button>
                </div>
                <div class="grow p-1 border border-[#b0b2b0] bg-[#fbfbfb]">
                    <ul id="layers" class="h-full pt-px bg-[#f2f4f2]"></ul>
                </div>
            </div>
        </aside>
    </main>

    <!-- Message panel -->
    <section class="shrink-0 h-[35px] flex gap-[38px] pl-[13px] pt-px border border-t-0 border-[#a6a8a6] text-[12px] leading-4 text-[#0a5a0a]">
        <p>Pads<br>17</p>
        <p>Vias<br>0</p>
        <p>Track Segments<br>17</p>
        <p class="text-[#105a5a]">Nodes<br>17</p>
        <p class="text-[#8c0a0a]">Nets<br>11</p>
        <p>Links<br>7</p>
        <p>Connections<br>7</p>
        <p class="text-[#0a0a8c]">Unconnected<br>0</p>
    </section>

    <!-- Status bar -->
    <footer class="shrink-0 h-[22px] flex justify-end items-center text-[13px] whitespace-pre">
        <span class="w-[70px]">Z 4.63</span>
        <span class="w-[207px]">X 129.540000   Y 102.870000</span>
        <span class="w-[320px]">dx 129.540000   dy 102.870000   dist 165.417</span>
        <span class="w-[203px]">mm</span>
    </footer>

    <script>
        // Layer list
        const layers = [
            ['F.Cu', '#840000'], ['B.Cu', '#008400'], ['F.Adhes', '#840084'], ['B.Adhes', '#000084'],
            ['F.Paste', '#840000'], ['B.Paste', '#00c2c2'], ['F.SilkS', '#008484'], ['B.SilkS', '#840084'],
            ['F.Mask', '#840084'], ['B.Mask', '#848400'], ['Dwgs.User', '#c2c2c2'], ['Cmts.User', '#000084'],
            ['Eco1.User', '#008400'], ['Eco2.User', '#c2c200'], ['Edge.Cuts', '#c2c200'], ['Margin', '#c200c2'],
            ['F.CrtYd', '#848484'], ['B.CrtYd', '#c2c200'], ['F.Fab', '#c2c200'], ['B.Fab', '#840000']
        ];
        document.getElementById('layers').innerHTML = layers.map(([name, color], i) => `
            <li class="h-[23px] flex items-center pl-[3px] text-[12px]">
                <svg class="shrink-0 mr-[3px]" width="8" height="14">${i === 0 ? '<path d="M0 0l8 7H0z" fill="#7f7fff"/><path d="M0 14l8-7H0z" fill="#0000f0"/>' : ''}</svg>
                <button aria-label="${name} color" class="shrink-0 w-[18px] h-4 grid place-items-center border border-[#a6a8a6] rounded-xs bg-linear-to-b from-white to-[#e6e8e6]"><i class="w-1.5 h-1" style="background:${color}"></i></button>
                <label class="flex items-center">
                    <span class="grid place-items-center ml-[5px] mr-[10px]">
                        <input type="checkbox" checked class="peer col-start-1 row-start-1 appearance-none size-[14px] border border-[#5fc0ac] rounded-xs bg-white">
                        <svg class="col-start-1 row-start-1 pointer-events-none invisible peer-checked:visible" width="10" height="10" fill="none" stroke="#2e3436" stroke-width="2"><path d="M1 5l3 3 5-6"/></svg>
                    </span>
                    ${name}
                </label>
            </li>`).join('');

        // Grid dots, 50 mils apart
        let dots = '';
        for (let i = 0; i < 120; i++) {
            for (let j = 0; j < 70; j++) {
                dots += `M${Math.round(42 + i * 21.07)} ${Math.round(126 + j * 21.07)}h1v1h-1z`;
            }
        }
        document.getElementById('gridDots').setAttribute('d', dots);

        // Short hatch strokes along the inside of the copper zone
        let hatch = '';
        for (let x = 236; x < 1470; x += 8) hatch += `M${x} 169l6 5M${x + 6} 907l-6-5`;
        for (let y = 172; y < 900; y += 8) hatch += `M233 ${y}l6 5M1475 ${y + 5}l-6-5`;
        document.getElementById('zoneHatch').setAttribute('d', hatch);
    </script>
</body>
</html>
